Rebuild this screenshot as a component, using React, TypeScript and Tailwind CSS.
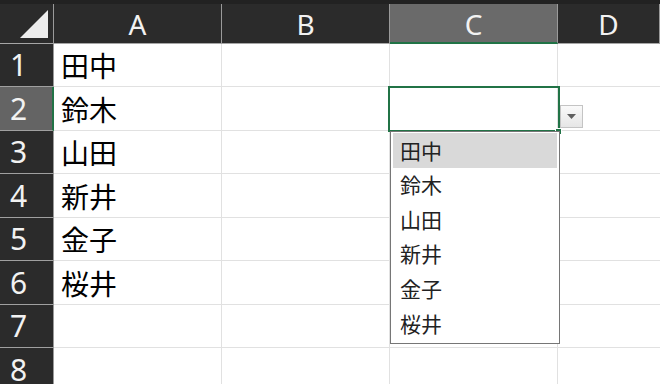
import React from 'react';

const names = ['田中', '鈴木', '山田', '新井', '金子', '桜井'];
const rowHeights = [43, 44, 43, 44, 43, 44, 43, 44];
const cols = ['A', 'B', 'C', 'D'];

const headFont = { fontFamily: '"Noto Sans", "Open Sans", sans-serif' };
const cellFont = { fontFamily: '"Noto Sans CJK JP", "Noto Sans", sans-serif' };

const ColHead = ({ label, selected, wide }: { label: string; selected?: boolean; wide?: boolean }) => (
  <div
    className={
      'flex items-center justify-center pt-[1px] text-[28px] leading-none text-[#f2f2f2] border-r border-[#9a9a9a] ' +
      (wide ? 'flex-1 ' : 'w-[168px] shrink-0 ') +
      (selected ? 'bg-[#6a6a6a] border-b-2 border-b-[#217346]' : 'border-b border-b-[#a6a6a6]')
    }
    style={headFont}
  >
    {label}
  </div>
);

const App = () => {
  return (
    <div className="relative w-[660px] h-[384px] overflow-hidden bg-white">
      {/* column header */}
      <div className="h-[4px] bg-[#222222]" />
      <div className="flex h-[40px] bg-[#2b2b2b]">
        <div className="relative w-[54px] shrink-0 border-r border-[#9a9a9a] border-b border-b-[#a6a6a6]">
          <svg className="absolute left-[20px] top-[6px]" width="29" height="29" viewBox="0 0 29 29">
            <polygon points="28,0 28,28 0,28" fill="#ededed" />
          </svg>
        </div>
        {cols.map((c) => (
          <ColHead key={c} label={c} selected={c === 'C'} wide={c === 'D'} />
        ))}
      </div>

      {/* rows */}
      {rowHeights.map((h, i) => {
        const n = i + 1;
        const sel = n === 2;
        return (
          <div key={n} className="flex" style={{ height: h }}>
            <div
              className={
                'w-[54px] shrink-0 flex items-center pl-[10px] text-[30px] leading-none text-[#f2f2f2] border-b border-[#a0a0a0] ' +
                (sel ? 'bg-[#646464] border-r-2 border-r-[#217346]' : 'bg-[#2b2b2b] border-r border-r-[#9a9a9a]')
              }
              style={headFont}
            >
              {n}
            </div>
            <div
              className="w-[168px] shrink-0 flex items-center pl-[7px] text-[28px] text-black border-r border-b border-[#e1e1e1]"
              style={cellFont}
            >
              {names[i] ?? ''}
            </div>
            <div className="w-[168px] shrink-0 border-r border-b border-[#e1e1e1]" />
            <div className="w-[168px] shrink-0 border-r border-b border-[#e1e1e1]" />
            <div className="flex-1 border-b border-[#e1e1e1]" />
          </div>
        );
      })}

      {/* active cell C2 */}
      <div className="absolute left-[388px] top-[86px] w-[172px] h-[46px] border-2 border-[#217346]" />
      <div className="absolute left-[555px] top-[128px] w-[7px] h-[7px] bg-[#217346] border border-white" />

      {/* dropdown button */}
      <div className="absolute left-[560px] top-[105px] w-[23px] h-[23px] flex items-center justify-center bg-gradient-to-b from-[#fafafa] to-[#e6e6e6] border border-[#c4c4c4]">
        <svg width="9" height="5" viewBox="0 0 9 5">
          <polygon points="0,0 9,0 4.5,5" fill="#5f5f5f" />
        </svg>
      </div>

      {/* list */}
      <div className="absolute left-[390px] top-[131px] w-[170px] h-[213px] bg-white border border-[#767676] px-[2px] py-[1px]" style={cellFont}>
        {names.map((nm, i) => (
          <div
            key={nm}
            className={'h-[34.6px] flex items-center pl-[7px] text-[21px] text-[#222222] ' + (i === 0 ? 'bg-[#d9d9d9]' : '')}
          >
            {nm}
          </div>
        ))}
      </div>
    </div>
  );
};

export default App;
